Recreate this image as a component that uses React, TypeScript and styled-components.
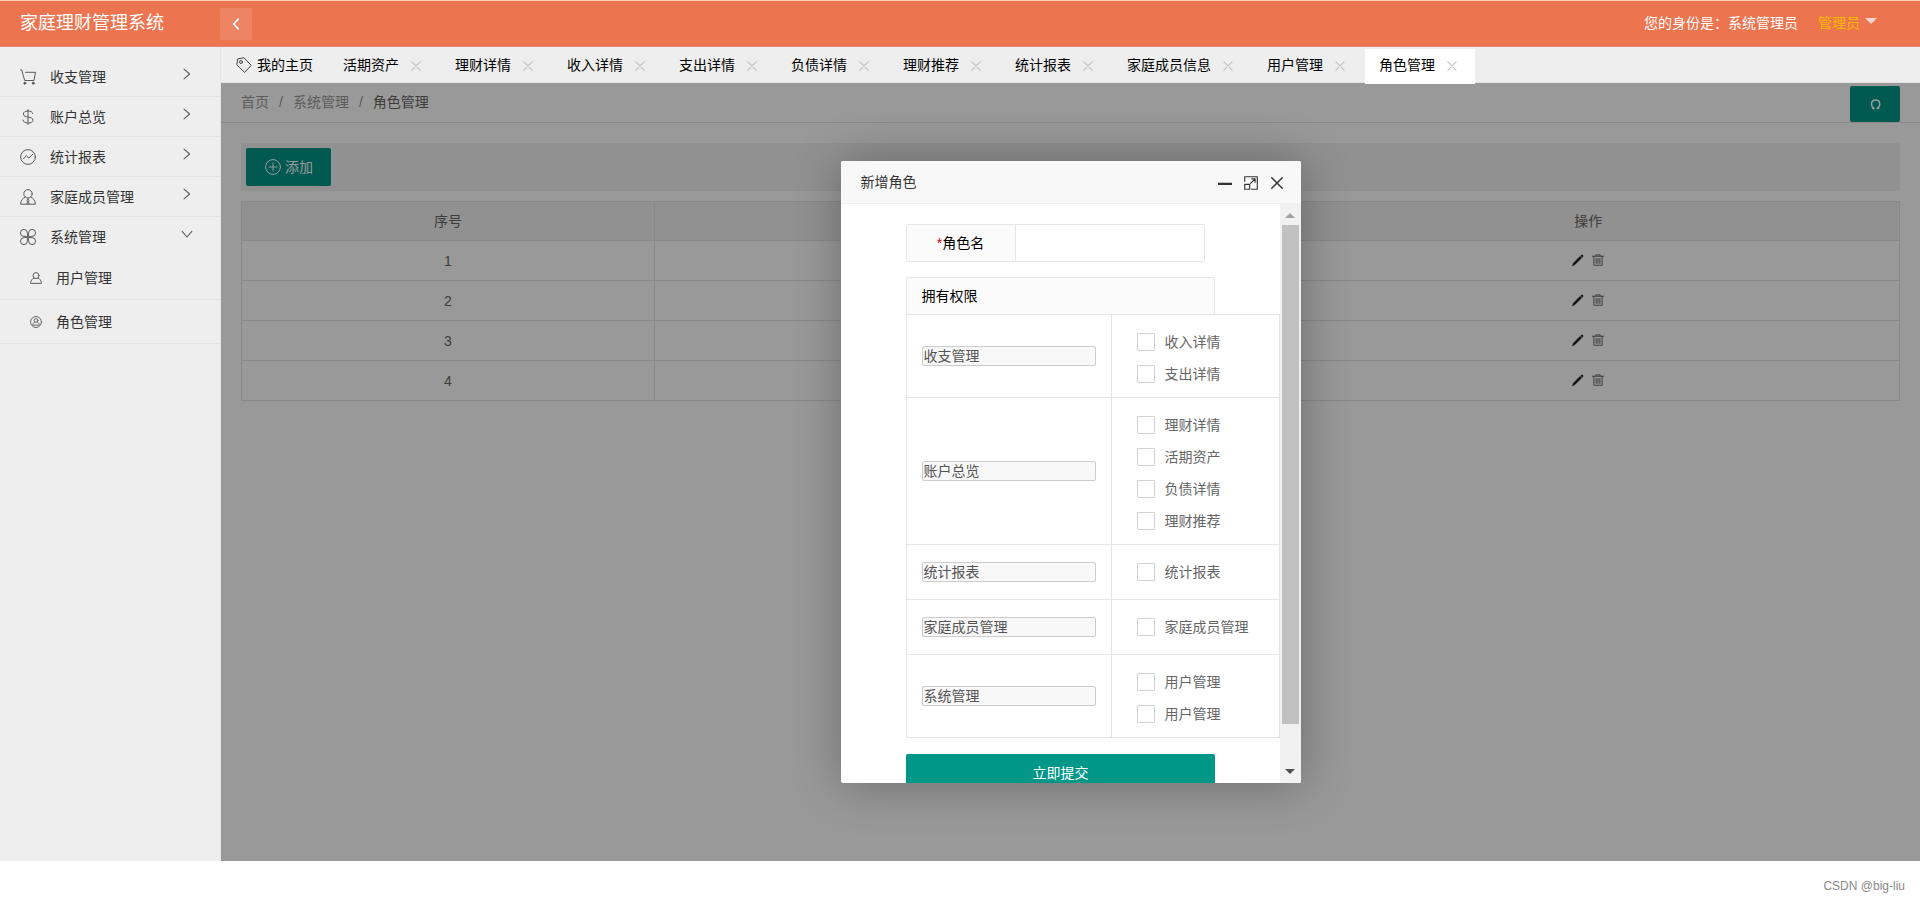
import React from "react";
import styled, { createGlobalStyle } from "styled-components";

const GlobalStyle = createGlobalStyle`
  * { box-sizing: border-box; }
  body {
    margin: 0;
    background: #fff;
    color: #666;
    font: 14px/24px "Liberation Sans", "Noto Sans CJK SC", sans-serif;
  }
  a { color: inherit; text-decoration: none; }
  button, input { font: inherit; margin: 0; }
  button { border: 0; padding: 0; background: none; color: inherit; cursor: pointer; }
`;

const Page = styled.div`
  display: flex;
  flex-direction: column;
  min-height: 100vh;
`;

const Header = styled.header`
  display: flex;
  align-items: center;
  height: 47px;
  padding: 0 40px 2px 20px;
  background: #ec744f;
  border-top: 1px solid #f9d3bb;
  border-bottom: 1px solid #dc8a74;
  color: #fff;
`;

const Brand = styled.h1`
  width: 200px;
  margin: 0;
  font-size: 18px;
  font-weight: 400;
`;

const CollapseButton = styled.button`
  display: flex;
  align-items: center;
  justify-content: center;
  width: 32px;
  height: 32px;
  margin-top: 2px;
  border-radius: 2px;
  background: rgba(255, 255, 255, 0.12);
`;

const Identity = styled.span`
  margin-left: auto;
`;

const UserLink = styled.a`
  display: flex;
  align-items: center;
  gap: 5px;
  margin: 0 3px 0 20px;
  color: #ffb800;
`;

const Caret = styled.span`
  margin-bottom: 3px;
  border: 6px solid transparent;
  border-top-color: rgba(255, 255, 255, 0.7);
  border-bottom-width: 0;
`;

const Body = styled.div`
  display: flex;
  flex: 1;
`;

const Sidebar = styled.nav`
  flex: 0 0 221px;
  padding-top: 10px;
  background: #eee;
  border-right: 1px solid #e4e4e4;
  color: #333;

  svg { color: #5a5a5a; }
`;

const MenuItem = styled.a<{ $open?: boolean }>`
  display: flex;
  align-items: center;
  gap: 14px;
  height: ${(p) => (p.$open ? 39 : 40)}px;
  padding: 0 27px 0 20px;
  border-bottom: ${(p) => (p.$open ? 0 : 1)}px solid #e2e2e2;
`;

const MenuArrow = styled.span`
  display: flex;
  margin: 0 0 6px auto;
`;

const SubItem = styled.a`
  display: flex;
  align-items: center;
  gap: 14px;
  height: 44px;
  padding-left: 30px;
  border-bottom: 1px solid #e2e2e2;
`;

const Content = styled.div`
  display: flex;
  flex: 1;
  flex-direction: column;
  min-width: 0;
`;

const TabBar = styled.div`
  display: flex;
  align-items: flex-end;
  gap: 2px;
  height: 36px;
  padding-left: 1px;
  background: #eee;
  border-bottom: 1px solid #e2e2e2;
  color: #000;
`;

const Tab = styled.div<{ $active?: boolean; $home?: boolean }>`
  display: flex;
  align-items: center;
  gap: 12px;
  height: 35px;
  margin-bottom: -2px;
  padding: 0 ${(p) => (p.$home ? 14 : 18)}px 4px 14px;
  ${(p) => p.$active && "position: relative; z-index: 2; background: #fff;"}

  a {
    display: flex;
    align-items: center;
    gap: 5px;
    white-space: nowrap;
  }
  a svg { color: #444; }
  button {
    display: flex;
    padding-top: 2px;
    color: #c2c2c2;
  }
`;

const Main = styled.main`
  position: relative;
  flex: 1;
  min-height: 480px;
`;

const Crumbs = styled.div`
  display: flex;
  align-items: center;
  justify-content: space-between;
  height: 40px;
  padding: 3px 20px 0;
  border-bottom: 1px solid #e5e5e5;
`;

const CrumbTrail = styled.nav`
  display: flex;
  gap: 10px;
  padding-bottom: 5px;
  color: #999;

  strong {
    font-weight: 400;
    color: #666;
  }
`;

const PrimaryButton = styled.button`
  display: flex;
  align-items: center;
  justify-content: center;
  gap: 4px;
  height: 38px;
  padding: 0 18px 0 19px;
  border-radius: 2px;
  background: #009688;
  color: #fff;
`;

const RefreshButton = styled(PrimaryButton)`
  width: 50px;
  height: 36px;
`;

const Panel = styled.section`
  padding: 20px;
`;

const Toolbar = styled.div`
  display: flex;
  margin-bottom: 10px;
  padding: 5px;
  background: #f2f2f2;
`;

const RoleTable = styled.table`
  width: 100%;
  border-collapse: collapse;
  table-layout: fixed;
  text-align: center;

  th, td {
    height: 40px;
    padding: 0;
    border: 1px solid #e4e4e4;
    font-weight: 400;
  }
  th {
    height: 39px;
    background: #f2f2f2;
  }
  th:first-child { width: 413px; }
`;

const RowActions = styled.div`
  display: flex;
  justify-content: center;
  gap: 8px;
  padding-bottom: 2px;

  button { display: flex; }
  button:first-child { color: #111; }
`;

const Shade = styled.div`
  position: absolute;
  inset: 0;
  display: flex;
  align-items: center;
  justify-content: center;
  overflow: hidden;
  background: rgba(0, 0, 0, 0.4);
`;

const Dialog = styled.section`
  display: flex;
  flex-direction: column;
  width: 460px;
  height: 80%;
  border-radius: 2px;
  background: #fff;
  box-shadow: 1px 1px 50px rgba(0, 0, 0, 0.3);
  overflow: hidden;
`;

const DialogTitle = styled.header`
  display: flex;
  flex: 0 0 43px;
  align-items: center;
  justify-content: space-between;
  padding: 0 17px 0 20px;
  background: #f8f8f8;
  border-bottom: 1px solid #eee;
  color: #333;

  h2 {
    margin: 0;
    font-size: 14px;
    font-weight: 400;
  }
  div {
    display: flex;
    gap: 12px;
    padding-top: 2px;
  }
  button { display: flex; }
`;

const DialogBody = styled.div`
  display: flex;
  flex: 1;
  min-height: 0;
`;

const Form = styled.form`
  flex: 1;
  padding: 20px 0 10px 65px;
  overflow-y: auto;
  scrollbar-width: none;
`;

const NameField = styled.div`
  display: flex;
  width: 299px;
  height: 38px;
  margin-bottom: 15px;
  border: 1px solid #e6e6e6;
  border-radius: 2px;
  color: #000;

  label {
    flex: 0 0 109px;
    line-height: 36px;
    text-align: center;
    background: #fbfbfb;
    border-right: 1px solid #e6e6e6;
  }
  label span { color: #d0021b; }
  input {
    flex: 1;
    min-width: 0;
    border: 0;
    padding: 0 10px;
    outline: 0;
  }
`;

const RightsHeading = styled.h3`
  width: 309px;
  height: 37px;
  margin: 0;
  padding: 0 15px;
  border: 1px solid #e6e6e6;
  border-bottom: 0;
  border-radius: 2px 2px 0 0;
  background: #fbfbfb;
  color: #000;
  font-size: 14px;
  font-weight: 400;
  line-height: 36px;
`;

const RightsTable = styled.table`
  width: 100%;
  margin-bottom: 16px;
  border-collapse: collapse;
  table-layout: fixed;

  td {
    height: 55px;
    border: 1px solid #e6e6e6;
  }
  td:first-child {
    width: 205px;
    padding: 0 15px;
  }
  td:last-child {
    padding: 11px 0 7px 25px;
    vertical-align: top;
  }
`;

const GroupInput = styled.input`
  display: block;
  width: 100%;
  height: 20px;
  padding: 0 1px;
  border: 1px solid #ccc;
  border-radius: 2px;
  background: #f8f8f8;
  color: #545454;
`;

const CheckLabel = styled.label`
  display: flex;
  align-items: center;
  gap: 10px;
  height: 32px;

  input {
    appearance: none;
    width: 18px;
    height: 18px;
    border: 1px solid #d2d2d2;
    border-radius: 1px;
    background: #fff;
  }
  input:checked {
    border-color: #009688;
    background: #009688;
  }
`;

const SubmitButton = styled(PrimaryButton)`
  width: 309px;
`;

const ScrollTrack = styled.div`
  display: flex;
  flex: 0 0 21px;
  flex-direction: column;
  align-items: center;
  padding: 9px 0;
  background: #f1f1f1;
`;

const ScrollArrow = styled.span<{ $down?: boolean }>`
  border: 5px solid transparent;
  ${(p) =>
    p.$down
      ? "margin-top: auto; border-bottom: 0; border-top-color: #505050;"
      : "border-top: 0; border-bottom-color: #a3a3a3;"}
`;

const ScrollThumb = styled.span`
  width: 17px;
  height: 89%;
  margin-top: 7px;
  background: #c1c1c1;
`;

const Footer = styled.footer`
  height: 41px;
  padding: 13px 15px 0;
  color: #888;
  font-size: 12px;
  text-align: right;
`;

const Svg = ({ size = 16, width = 1, children }: { size?: number; width?: number; children: React.ReactNode }) => (
  <svg
    width={size}
    height={size}
    viewBox="0 0 16 16"
    fill="none"
    stroke="currentColor"
    strokeWidth={width}
    strokeLinecap="round"
    strokeLinejoin="round"
    aria-hidden="true"
  >
    {children}
  </svg>
);

const icons = {
  cart: (
    <Svg>
      <path d="M.5.8h1.200l3 10.700h9.300L15.500 3.300H5.500" />
      <circle cx="4.800" cy="14.200" r="1" fill="currentColor" />
      <circle cx="13.200" cy="14.200" r="1" fill="currentColor" />
    </Svg>
  ),
  dollar: (
    <Svg>
      <path d="M8 .6v14.800M12.700 4.600C12.500 3 10.800 2 8 2S3.400 3.200 3.400 5c0 4.400 9.600 1.800 9.600 6.200 0 1.800-2 2.800-5 2.800s-4.900-1.200-5-3" />
    </Svg>
  ),
  chart: (
    <Svg>
      <circle cx="8" cy="8" r="7.400" />
      <path d="M3.400 9.800l3-3.200 2.400 2.600 3.800-3.800" />
    </Svg>
  ),
  member: (
    <Svg>
      <circle cx="8" cy="4.800" r="4.200" />
      <path d="M5.200 8.200C2.600 9.200.8 11.300.6 15.200h14.800c-.2-3.900-2-6-4.600-7M8 10l-1 1.200.5 1L7 15M8 10l1 1.200-.5 1L9 15" />
    </Svg>
  ),
  modules: (
    <Svg>
      <path d="M7.400 7.400H4A3.500 3.500 0 1 1 7.400 4zM8.600 7.400V4A3.500 3.500 0 1 1 12 7.400zM7.400 8.600V12A3.500 3.500 0 1 1 4 8.600zM8.600 8.600H12A3.500 3.500 0 1 1 8.600 12z" />
    </Svg>
  ),
  user: (
    <Svg size={12} width={1.3}>
      <circle cx="8" cy="4.800" r="4" />
      <path d="M5.200 8C2.600 9 1 11.300.8 15.200h14.400C15 11.300 13.400 9 10.800 8" />
    </Svg>
  ),
  role: (
    <Svg size={12} width={1.2}>
      <circle cx="8" cy="8" r="7.300" />
      <circle cx="8" cy="6" r="2.500" />
      <path d="M6.300 8C4.500 9 3.800 10.300 3.800 12.200h8.400c0-1.900-.7-3.200-2.500-4.200" />
    </Svg>
  ),
  tag: (
    <Svg>
      <path d="M.8 7.300L1.800 1.800 8 .8l7.200 7.600-6.400 6.800z" />
      <circle cx="5" cy="5" r="1.500" />
    </Svg>
  ),
  right: (
    <Svg size={12} width={1.4}>
      <path d="M4 1.500L11.500 8 4 14.500" />
    </Svg>
  ),
  down: (
    <Svg size={12} width={1.4}>
      <path d="M1.500 4.500L8 12l6.500-7.500" />
    </Svg>
  ),
  left: (
    <Svg size={12} width={2.2}>
      <path d="M11 1.500L5 8l6 6.500" />
    </Svg>
  ),
  smallClose: (
    <Svg size={10} width={1.8}>
      <path d="M1.500 1.500l13 13M14.500 1.500l-13 13" />
    </Svg>
  ),
  refresh: (
    <Svg size={12} width={2}>
      <path d="M3.500 14H5.500C3 12.500 2 10.700 2 8.200 2 4.700 4.300 2.500 7.500 2.500S13 4.700 13 8.200c0 2.500-1 4.300-3.500 5.800h2" />
    </Svg>
  ),
  add: (
    <Svg>
      <circle cx="8" cy="8" r="7.400" />
      <path d="M8 4v8M4 8h8" />
    </Svg>
  ),
  pencil: (
    <Svg size={12}>
      <path d="M1 15l1-2.800 8.800-8.800 1.800 1.800L3.800 14zM12 2.300l1.200-1.200 1.700 1.700L13.700 4z" fill="currentColor" />
    </Svg>
  ),
  trash: (
    <Svg size={12} width={1.3}>
      <path d="M.6 3h14.800M5 2.800V1.200h6v1.600M2.500 3v12h11V3M5.500 6v6.500M8 6v6.500M10.500 6v6.500" />
    </Svg>
  ),
  minimize: (
    <Svg size={14} width={2.4}>
      <path d="M1 9h14" strokeLinecap="square" />
    </Svg>
  ),
  maximize: (
    <Svg size={14} width={1.3}>
      <path d="M.8 6V.8h14.400v14.400H8.500M.8 9.500h5.700v5.700H.8zM7.500 8.500L12.500 3.500M9 3.300h3.700V7" />
    </Svg>
  ),
  close: (
    <Svg size={14} width={1.7}>
      <path d="M2 2l12 12M14 2L2 14" />
    </Svg>
  ),
};

const menu = [
  { icon: icons.cart, label: "收支管理" },
  { icon: icons.dollar, label: "账户总览" },
  { icon: icons.chart, label: "统计报表" },
  { icon: icons.member, label: "家庭成员管理" },
  { icon: icons.modules, label: "系统管理", open: true },
];

const tabs = [
  "活期资产",
  "理财详情",
  "收入详情",
  "支出详情",
  "负债详情",
  "理财推荐",
  "统计报表",
  "家庭成员信息",
  "用户管理",
  "角色管理",
];

const rights = [
  { group: "收支管理", items: ["收入详情", "支出详情"] },
  { group: "账户总览", items: ["理财详情", "活期资产", "负债详情", "理财推荐"] },
  { group: "统计报表", items: ["统计报表"] },
  { group: "家庭成员管理", items: ["家庭成员管理"] },
  { group: "系统管理", items: ["用户管理", "用户管理"] },
];

export default function App() {
  return (
    <Page>
      <GlobalStyle />
      <Header>
        <Brand>家庭理财管理系统</Brand>
        <CollapseButton aria-label="收起菜单">{icons.left}</CollapseButton>
        <Identity>您的身份是：系统管理员</Identity>
        <UserLink href="#user">
          管理员
          <Caret />
        </UserLink>
      </Header>

      <Body>
        <Sidebar>
          {menu.map((m) => (
            <MenuItem href="#menu" key={m.label} $open={m.open}>
              {m.icon}
              {m.label}
              <MenuArrow>{m.open ? icons.down : icons.right}</MenuArrow>
            </MenuItem>
          ))}
          <SubItem href="#users">
            {icons.user}
            用户管理
          </SubItem>
          <SubItem href="#roles">
            {icons.role}
            角色管理
          </SubItem>
        </Sidebar>

        <Content>
          <TabBar>
            <Tab $home>
              <a href="#home">
                {icons.tag}
                我的主页
              </a>
            </Tab>
            {tabs.map((t, i) => (
              <Tab key={t} $active={i === tabs.length - 1}>
                <a href="#tab">{t}</a>
                <button aria-label={"关闭" + t}>{icons.smallClose}</button>
              </Tab>
            ))}
          </TabBar>

          <Main>
            <Crumbs>
              <CrumbTrail>
                <a href="#home">首页</a>
                <span>/</span>
                <a href="#system">系统管理</a>
                <span>/</span>
                <strong>角色管理</strong>
              </CrumbTrail>
              <RefreshButton aria-label="刷新">{icons.refresh}</RefreshButton>
            </Crumbs>
            <Panel>
              <Toolbar>
                <PrimaryButton>
                  {icons.add}
                  添加
                </PrimaryButton>
              </Toolbar>
              <RoleTable>
                <thead>
                  <tr>
                    <th>序号</th>
                    <th />
                    <th>操作</th>
                  </tr>
                </thead>
                <tbody>
                  {[1, 2, 3, 4].map((n) => (
                    <tr key={n}>
                      <td>{n}</td>
                      <td />
                      <td>
                        <RowActions>
                          <button aria-label="编辑">{icons.pencil}</button>
                          <button aria-label="删除">{icons.trash}</button>
                        </RowActions>
                      </td>
                    </tr>
                  ))}
                </tbody>
              </RoleTable>
            </Panel>

            <Shade>
              <Dialog role="dialog" aria-labelledby="dialog-title">
                <DialogTitle>
                  <h2 id="dialog-title">新增角色</h2>
                  <div>
                    <button aria-label="最小化">{icons.minimize}</button>
                    <button aria-label="最大化">{icons.maximize}</button>
                    <button aria-label="关闭">{icons.close}</button>
                  </div>
                </DialogTitle>
                <DialogBody>
                  <Form>
                    <NameField>
                      <label htmlFor="role-name">
                        <span>*</span>角色名
                      </label>
                      <input id="role-name" type="text" />
                    </NameField>
                    <RightsHeading>拥有权限</RightsHeading>
                    <RightsTable>
                      <tbody>
                        {rights.map((r) => (
                          <tr key={r.group}>
                            <td>
                              <GroupInput type="text" disabled aria-label="权限分组" value={r.group} />
                            </td>
                            <td>
                              {r.items.map((item, i) => (
                                <CheckLabel key={i}>
                                  <input type="checkbox" />
                                  {item}
                                </CheckLabel>
                              ))}
                            </td>
                          </tr>
                        ))}
                      </tbody>
                    </RightsTable>
                    <SubmitButton type="button">立即提交</SubmitButton>
                  </Form>
                  <ScrollTrack aria-hidden="true">
                    <ScrollArrow />
                    <ScrollThumb />
                    <ScrollArrow $down />
                  </ScrollTrack>
                </DialogBody>
              </Dialog>
            </Shade>
          </Main>
        </Content>
      </Body>
      <Footer>CSDN @big-liu</Footer>
    </Page>
  );
}
